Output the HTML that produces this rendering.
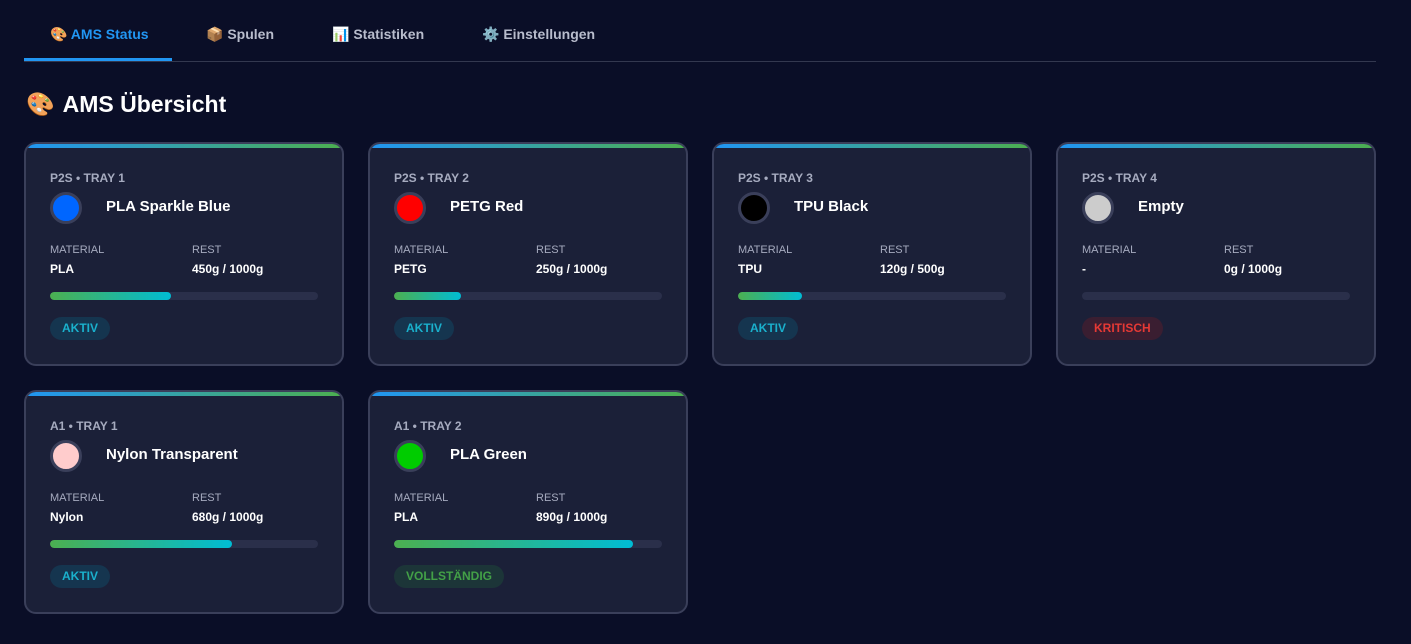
<!DOCTYPE html>
<html><head><meta charset="utf-8">
<style>
*{box-sizing:border-box;margin:0;padding:0}
body{width:1411px;height:644px;background:#0a0e27;font-family:"Liberation Sans","DejaVu Sans",sans-serif;overflow:hidden;position:relative}
.tabs{position:absolute;left:24px;top:0;width:1352px;height:62px;border-bottom:1px solid #33384f}
.tab{position:absolute;top:26px;font-size:14px;font-weight:bold;color:#b8bccc}
.tab.act{color:#2196f3}
.ul{position:absolute;left:0;top:58px;width:148px;height:3px;background:#2196f3}
h1{position:absolute;left:26px;top:91px;font-size:23px;color:#fff;font-weight:bold}
h1 span{margin-right:8px}
.card{position:absolute;width:320px;height:224px;background:#1b2038;border:2px solid #3a3f5a;border-radius:12px;overflow:hidden}
.card:before{content:"";position:absolute;left:0;top:0;right:0;height:4px;background:linear-gradient(90deg,#2196f3,#4caf50)}
.tl{position:absolute;left:24px;top:27px;font-size:12px;font-weight:bold;color:#a6abbf}
.dot{position:absolute;left:24px;top:48px;width:32px;height:32px;border-radius:50%;border:3px solid #3a3f5a}
.nm{position:absolute;left:80px;top:54px;font-size:15px;font-weight:bold;color:#fff}
.lb{position:absolute;top:100px;font-size:11px;color:#a6abbf}
.vl{position:absolute;top:118px;font-size:12px;font-weight:bold;color:#fff}
.bar{position:absolute;left:24px;top:148px;width:268px;height:8px;border-radius:4px;background:#2a2f4a;overflow:hidden}
.fill{height:100%;border-radius:4px;background:linear-gradient(90deg,#4caf50,#00bcd4)}
.bd{position:absolute;left:24px;top:173px;height:23px;line-height:23px;padding:0 12px;border-radius:12px;font-size:12px;font-weight:bold}
.a{background:#15354f;color:#1ab0cc}
.k{background:#3a1e31;color:#e53935}
.v{background:#1c3538;color:#43a047}
</style></head><body>
<div class="tabs">
<div class="tab act" style="left:26px">🎨 AMS Status</div>
<div class="tab" style="left:182px">📦 Spulen</div>
<div class="tab" style="left:308px">📊 Statistiken</div>
<div class="tab" style="left:458px">⚙️ Einstellungen</div>
<div class="ul"></div>
</div>
<h1><span>🎨</span>AMS Übersicht</h1>

<div class="card" style="left:24px;top:142px">
<div class="tl">P2S • TRAY 1</div><div class="dot" style="background:#0066ff"></div><div class="nm">PLA Sparkle Blue</div>
<div class="lb" style="left:24px">MATERIAL</div><div class="lb" style="left:166px">REST</div>
<div class="vl" style="left:24px">PLA</div><div class="vl" style="left:166px">450g / 1000g</div>
<div class="bar"><div class="fill" style="width:45%"></div></div><div class="bd a">AKTIV</div></div>

<div class="card" style="left:368px;top:142px">
<div class="tl">P2S • TRAY 2</div><div class="dot" style="background:#ff0000"></div><div class="nm">PETG Red</div>
<div class="lb" style="left:24px">MATERIAL</div><div class="lb" style="left:166px">REST</div>
<div class="vl" style="left:24px">PETG</div><div class="vl" style="left:166px">250g / 1000g</div>
<div class="bar"><div class="fill" style="width:25%"></div></div><div class="bd a">AKTIV</div></div>

<div class="card" style="left:712px;top:142px">
<div class="tl">P2S • TRAY 3</div><div class="dot" style="background:#000"></div><div class="nm">TPU Black</div>
<div class="lb" style="left:24px">MATERIAL</div><div class="lb" style="left:166px">REST</div>
<div class="vl" style="left:24px">TPU</div><div class="vl" style="left:166px">120g / 500g</div>
<div class="bar"><div class="fill" style="width:24%"></div></div><div class="bd a">AKTIV</div></div>

<div class="card" style="left:1056px;top:142px">
<div class="tl">P2S • TRAY 4</div><div class="dot" style="background:#cccccc"></div><div class="nm">Empty</div>
<div class="lb" style="left:24px">MATERIAL</div><div class="lb" style="left:166px">REST</div>
<div class="vl" style="left:24px">-</div><div class="vl" style="left:166px">0g / 1000g</div>
<div class="bar"><div class="fill" style="width:0%"></div></div><div class="bd k">KRITISCH</div></div>

<div class="card" style="left:24px;top:390px">
<div class="tl">A1 • TRAY 1</div><div class="dot" style="background:#ffcccc"></div><div class="nm">Nylon Transparent</div>
<div class="lb" style="left:24px">MATERIAL</div><div class="lb" style="left:166px">REST</div>
<div class="vl" style="left:24px">Nylon</div><div class="vl" style="left:166px">680g / 1000g</div>
<div class="bar"><div class="fill" style="width:68%"></div></div><div class="bd a">AKTIV</div></div>

<div class="card" style="left:368px;top:390px">
<div class="tl">A1 • TRAY 2</div><div class="dot" style="background:#00cc00"></div><div class="nm">PLA Green</div>
<div class="lb" style="left:24px">MATERIAL</div><div class="lb" style="left:166px">REST</div>
<div class="vl" style="left:24px">PLA</div><div class="vl" style="left:166px">890g / 1000g</div>
<div class="bar"><div class="fill" style="width:89%"></div></div><div class="bd v">VOLLSTÄNDIG</div></div>
</body></html>
